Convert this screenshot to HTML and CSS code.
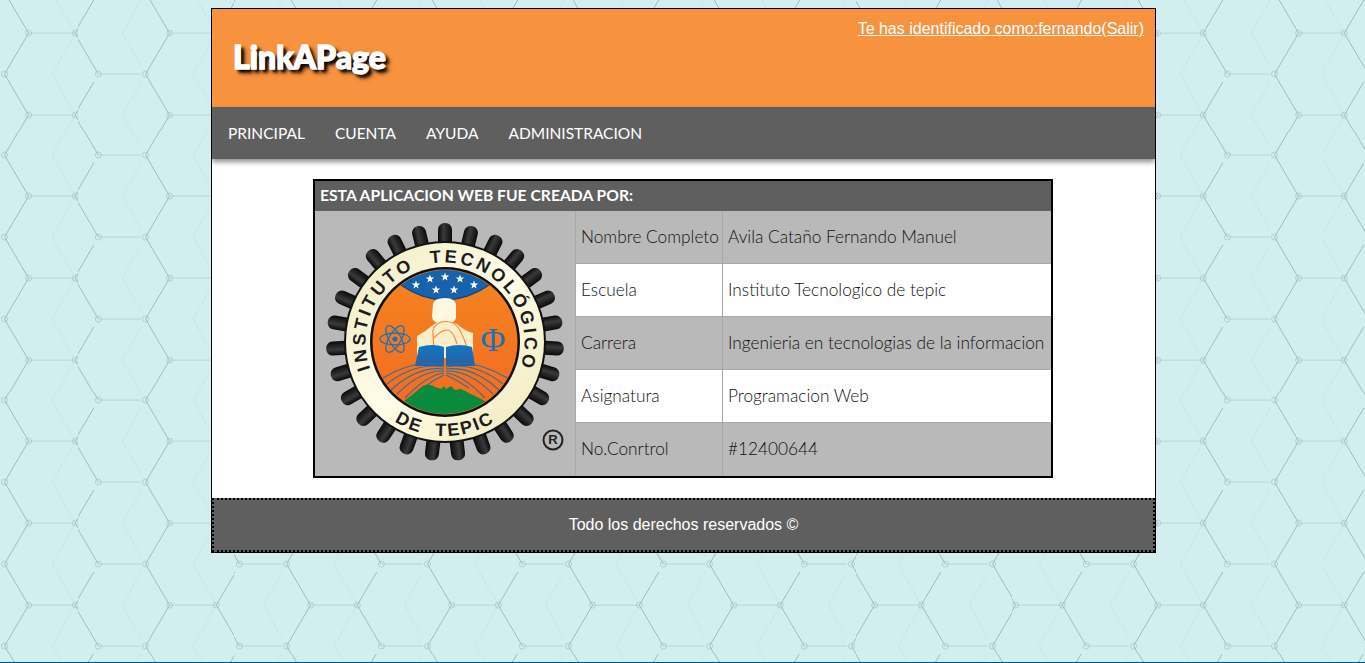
FILE: index.html
```html
<!DOCTYPE html>
<html lang="es">
<head>
    <meta charset="UTF-8">
    <meta name="viewport" content="width=device-width, initial-scale=1.0">
    <title>LinkAPage</title>
    <link rel="stylesheet" href="styles.css">
</head>
<body>
    <div class="wrapper">
        <header class="site-header">
            <a class="user-link" href="#">Te has identificado como:fernando(Salir)</a>
            <h1 class="brand">LinkAPage</h1>
        </header>
        <nav class="main-nav">
            <a href="#">PRINCIPAL</a>
            <a href="#">CUENTA</a>
            <a href="#">AYUDA</a>
            <a href="#">ADMINISTRACION</a>
        </nav>
        <main class="content">
            <table class="credits">
                <colgroup>
                    <col class="col-logo">
                    <col class="col-label">
                    <col class="col-value">
                </colgroup>
                <thead>
                    <tr><th colspan="3">ESTA APLICACION WEB FUE CREADA POR:</th></tr>
                </thead>
                <tbody>
                    <tr class="grey">
                        <td class="logo-cell" rowspan="5">
                            <svg class="logo" viewBox="-120 -120 240 240" width="240" height="240">
                                <defs>
                                    <linearGradient id="tooth" x1="0" x2="1" y1="0" y2="0">
                                        <stop offset="0" stop-color="#080808"/>
                                        <stop offset="0.4" stop-color="#3a3a3a"/>
                                        <stop offset="1" stop-color="#0a0a0a"/>
                                    </linearGradient>
                                    <linearGradient id="disk" x1="0" x2="0" y1="0" y2="1">
                                        <stop offset="0" stop-color="#f58420"/>
                                        <stop offset="1" stop-color="#f26a21"/>
                                    </linearGradient>
                                    <linearGradient id="ring" x1="0" x2="1" y1="0" y2="1">
                                        <stop offset="0" stop-color="#efe9c0"/>
                                        <stop offset="0.5" stop-color="#fffde9"/>
                                        <stop offset="1" stop-color="#efe8b8"/>
                                    </linearGradient>
                                    <linearGradient id="book" x1="0" x2="0" y1="0" y2="1">
                                        <stop offset="0" stop-color="#0f78c0"/>
                                        <stop offset="1" stop-color="#2a5fa8"/>
                                    </linearGradient>
                                    <rect id="t" x="-7" y="-119" width="14" height="26" rx="6.5"/>
                                    <polygon id="star" points="0,-4.4 1.1,-1.4 4.2,-1.4 1.7,0.5 2.6,3.6 0,1.8 -2.6,3.6 -1.7,0.5 -4.2,-1.4 -1.1,-1.4"/>
                                    <clipPath id="disk-clip"><circle r="72"/></clipPath>
                                    <path id="arc-top" d="M0,79.5 A79.5,79.5 0 1 1 0,-79.5 A79.5,79.5 0 1 1 0,79.5"/>
                                    <path id="arc-bottom" d="M-94,0 A94,94 0 0 0 94,0"/>
                                </defs>
                                <g fill="url(#tooth)">
                                    <use href="#t"/><use href="#t" transform="rotate(13.33)"/><use href="#t" transform="rotate(26.67)"/>
                                    <use href="#t" transform="rotate(40)"/><use href="#t" transform="rotate(53.33)"/><use href="#t" transform="rotate(66.67)"/>
                                    <use href="#t" transform="rotate(80)"/><use href="#t" transform="rotate(93.33)"/><use href="#t" transform="rotate(106.67)"/>
                                    <use href="#t" transform="rotate(120)"/><use href="#t" transform="rotate(133.33)"/><use href="#t" transform="rotate(146.67)"/>
                                    <use href="#t" transform="rotate(160)"/><use href="#t" transform="rotate(173.33)"/><use href="#t" transform="rotate(186.67)"/>
                                    <use href="#t" transform="rotate(200)"/><use href="#t" transform="rotate(213.33)"/><use href="#t" transform="rotate(226.67)"/>
                                    <use href="#t" transform="rotate(240)"/><use href="#t" transform="rotate(253.33)"/><use href="#t" transform="rotate(266.67)"/>
                                    <use href="#t" transform="rotate(280)"/><use href="#t" transform="rotate(293.33)"/><use href="#t" transform="rotate(306.67)"/>
                                    <use href="#t" transform="rotate(320)"/><use href="#t" transform="rotate(333.33)"/><use href="#t" transform="rotate(346.67)"/>
                                </g>
                                <circle r="101" fill="#111"/>
                                <circle r="99" fill="url(#ring)"/>
                                <circle r="75" fill="#111"/>
                                <circle r="72.5" fill="url(#disk)"/>
                                <text class="ring-text"><textPath href="#arc-top" startOffset="50%" text-anchor="middle" xml:space="preserve">INSTITUTO  TECNOLÓGICO</textPath></text>
                                <text class="ring-text ring-text-low"><textPath href="#arc-bottom" startOffset="50%" text-anchor="middle" xml:space="preserve">DE  TEPIC</textPath></text>
                                <g clip-path="url(#disk-clip)">
                                    <path d="M-46,-58 A73,73 0 0 1 46,-58 Q0,-26 -46,-58Z" fill="#1662ac" stroke="#143a6b" stroke-width="1"/>
                                    <g fill="#fff">
                                        <use href="#star" x="-29" y="-57"/><use href="#star" x="-15" y="-63"/><use href="#star" x="0" y="-65"/>
                                        <use href="#star" x="15" y="-63"/><use href="#star" x="29" y="-57"/><use href="#star" x="-9" y="-52"/>
                                        <use href="#star" x="9" y="-52"/>
                                    </g>
                                    <!-- figura -->
                                    <path d="M-12,-38 Q-11,-44 0,-44 Q11,-44 11,-36 L11,-24 Q10,-20 5,-19 L-6,-19 Q-13,-20 -13,-26Z" fill="#fff8e0"/>
                                    <path d="M-28,-6 Q-20,-10 -12,-17 Q-2,-24 12,-18 Q20,-11 28,-9 L28,16 L-28,16Z" fill="#fdeec9"/>
                                    <path d="M-12,-6 Q-14,-16 -4,-20 Q6,-22 12,-16 Q18,-8 22,6 M-12,-6 L-11,7 M-11,-4 Q-4,-12 2,-12 Q8,-12 12,2" fill="none" stroke="#f08a3c" stroke-width="1.2"/>
                                    <!-- libro -->
                                    <path d="M-26,5 Q-12,1 -1,5 L-1,24 L-30,24Z" fill="url(#book)"/>
                                    <path d="M1,5 Q14,1 27,5 L30,24 L1,24Z" fill="url(#book)"/>
                                    <!-- raices -->
                                    <g fill="none" stroke="#2f6e9f" stroke-width="1.1">
                                        <path d="M-1,23 Q-30,16 -62,36"/><path d="M-1,25 Q-30,20 -58,42"/><path d="M-1,27 Q-28,24 -54,48"/>
                                        <path d="M-1,29 Q-24,28 -48,52"/><path d="M-1,31 Q-18,33 -40,56"/><path d="M-1,33 Q-12,38 -22,46"/>
                                        <path d="M1,23 Q30,16 62,36"/><path d="M1,25 Q30,20 58,42"/><path d="M1,27 Q28,24 54,48"/>
                                        <path d="M1,29 Q24,28 48,52"/><path d="M1,31 Q18,33 40,56"/><path d="M1,33 Q12,38 24,46"/>
                                    </g>
                                    <path d="M-42,60 L-22,44 Q-16,41 -10,45 L-4,47 L-1,44 L1,47 L6,44 L10,48 L16,47 L22,50 L42,60 L30,80 L-30,80Z" fill="#0a8a3d"/>
                                    <!-- atomo -->
                                    <g fill="none" stroke="#1c72b5" stroke-width="1.3">
                                        <ellipse cx="-50" cy="-3" rx="15" ry="6"/>
                                        <ellipse cx="-50" cy="-3" rx="15" ry="6" transform="rotate(60 -50 -3)"/>
                                        <ellipse cx="-50" cy="-3" rx="15" ry="6" transform="rotate(120 -50 -3)"/>
                                    </g>
                                    <circle cx="-50" cy="-3" r="2.6" fill="#1c72b5"/>
                                    <text class="phi" x="48" y="9">Φ</text>
                                </g>
                                <text class="reg" x="108" y="97.5">R</text>
                                <circle cx="108" cy="98" r="9.5" fill="none" stroke="#222" stroke-width="2"/>
                            </svg>
                        </td>
                        <td>Nombre Completo</td>
                        <td>Avila Cataño Fernando Manuel</td>
                    </tr>
                    <tr class="white"><td>Escuela</td><td>Instituto Tecnologico de tepic</td></tr>
                    <tr class="grey"><td>Carrera</td><td>Ingenieria en tecnologias de la informacion</td></tr>
                    <tr class="white"><td>Asignatura</td><td>Programacion Web</td></tr>
                    <tr class="grey"><td>No.Conrtrol</td><td>#12400644</td></tr>
                </tbody>
            </table>
        </main>
        <footer class="site-footer">Todo los derechos reservados ©</footer>
    </div>
</body>
</html>
```

FILE: styles.css
```css
html, body {
    margin: 0;
    padding: 0;
}

body {
    box-sizing: border-box;
    min-height: 100vh;
    padding: 8px 0 0 2px;
    border-bottom: 1px solid #00508c;
    background-color: #d3eeef;
    background-size: 141.1px 81.7px;
    background-image: url("data:image/svg+xml,%3Csvg xmlns='http://www.w3.org/2000/svg' viewBox='0 0 141.5 81.75'%3E%3Cg fill='none' stroke='%23c3dcdd' stroke-width='.7'%3E%3Cpath d='M75 33L52 73.9L75 114.75M75 -48.75L52 -7.85L75 33M123 33L146 73.9M123 33L146 -7.85' stroke='%23c6e2e3'/%3E%3Cpath d='M28.5 33H75M99 73.9H146' stroke='%23b6d2d4' stroke-width='.9'/%3E%3Cpath d='M28.5 33L4.5 73.9L28.5 114.75M4.5 -7.85L28.5 33M75 33L99 73.9M99 -7.85L75 33M146 73.9L170 33' stroke='%2392a9ab' stroke-width='.75'/%3E%3Ccircle cx='28.5' cy='33' r='3' stroke='%23a6c1c3'/%3E%3Ccircle cx='75' cy='33' r='3' stroke='%23a6c1c3'/%3E%3Ccircle cx='99' cy='73.9' r='3' stroke='%23a6c1c3'/%3E%3Ccircle cx='4.5' cy='73.9' r='3' stroke='%23a6c1c3'/%3E%3C/g%3E%3C/svg%3E");
}

.wrapper {
    box-sizing: border-box;
    width: 945px;
    margin: 0 auto;
    border: 1px solid black;
    background-color: white;
    overflow: hidden;
}

.site-header {
    display: flex;
    flex-direction: column;
    box-sizing: border-box;
    height: 98px;
    padding: 10px 11px 0 21px;
    background-color: #f7923f;
}

.user-link {
    align-self: flex-end;
    color: white;
    font-family: "Liberation Sans", sans-serif;
    font-size: 16px;
    line-height: 19px;
}

.brand {
    margin: -1px 0 0 0;
    color: white;
    font-family: "Lato", sans-serif;
    font-size: 32px;
    font-weight: 900;
    line-height: 40px;
    -webkit-text-stroke: 1.4px white;
    text-shadow: 3px 3px 3px black, 4px 4px 4px rgba(0,0,0,0.7);
}

.main-nav {
    position: relative;
    display: flex;
    gap: 30px;
    box-sizing: border-box;
    height: 52px;
    padding-left: 16px;
    align-items: center;
    background-color: #5f5f5f;
    box-shadow: 0 3px 5px rgba(0,0,0,0.45);
}

.main-nav a {
    color: white;
    font-family: "Lato", sans-serif;
    font-size: 15.5px;
    text-decoration: none;
}

.content {
    padding: 20px 0;
}

.credits {
    box-sizing: border-box;
    width: 740px;
    margin-left: 101px;
    border: 2px solid black;
    border-spacing: 0;
    table-layout: fixed;
    font-family: "Lato", sans-serif;
    font-size: 17.25px;
    font-weight: 300;
    color: #111;
}

.col-logo {
    width: 261px;
}

.col-label {
    width: 147px;
}

.credits th {
    box-sizing: border-box;
    height: 30px;
    padding: 0 5px 2px;
    background-color: #5f5f5f;
    color: white;
    font-size: 15.7px;
    font-weight: 700;
    text-align: left;
}

.credits td {
    box-sizing: border-box;
    height: 53px;
    padding: 0 5px 2px;
    border-bottom: 1px solid #a8a8a8;
    border-right: 1px solid #a8a8a8;
    white-space: nowrap;
}

.credits td:last-child {
    border-right: none;
}

.credits tr:last-child td {
    border-bottom: none;
}

.grey td {
    background-color: #b9b9b9;
}

.white td {
    background-color: white;
}

.credits .logo-cell {
    padding: 11px 0 0 10px;
    border-bottom: none;
    vertical-align: top;
}

.logo {
    display: block;
}

.ring-text {
    fill: #1c1c1c;
    font-family: "Liberation Sans", sans-serif;
    font-size: 18px;
    font-weight: 700;
    letter-spacing: 3px;
}

.ring-text-low {
    letter-spacing: 2.1px;
}

.phi {
    fill: #1c72b5;
    font-family: "Liberation Serif", serif;
    font-size: 34px;
    text-anchor: middle;
}

.reg {
    fill: #222;
    font-family: "Liberation Sans", sans-serif;
    font-size: 13px;
    font-weight: 700;
    text-anchor: middle;
    dominant-baseline: central;
}

.site-footer {
    box-sizing: border-box;
    height: 54px;
    border: 2px dotted black;
    background-color: #5f5f5f;
    color: white;
    font-family: "Liberation Sans", sans-serif;
    font-size: 16px;
    line-height: 49px;
    text-align: center;
}
```
